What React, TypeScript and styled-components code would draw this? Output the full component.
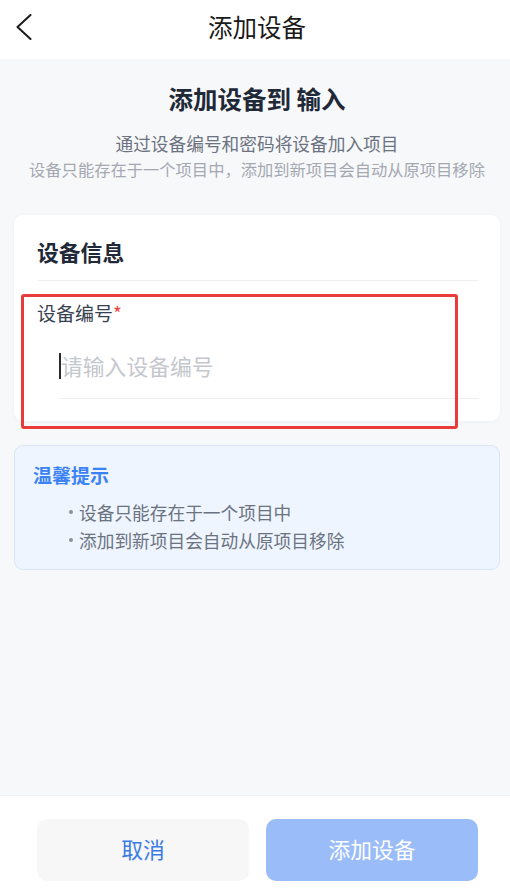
import React from "react";
import styled, { createGlobalStyle } from "styled-components";

const GlobalStyle = createGlobalStyle`
  html, body {
    margin: 0;
    padding: 0;
    background: #f7f8fa;
  }
  body {
    font-family: "Noto Sans CJK SC", "Noto Sans", sans-serif;
    -webkit-font-smoothing: antialiased;
  }
  * { box-sizing: border-box; }
`;

const Page = styled.div`
  width: 510px;
  min-height: 896px;
  display: flex;
  flex-direction: column;
  background: #f7f8fa;
`;

const Header = styled.header`
  height: 59px;
  background: #ffffff;
  display: grid;
  grid-template-columns: 1fr auto 1fr;
  align-items: center;
  padding: 0 10px 5px 14px;
`;

const BackButton = styled.button`
  justify-self: start;
  border: none;
  background: transparent;
  padding: 0 0 0 2px;
  display: flex;
  align-items: center;
  cursor: pointer;
`;

const HeaderTitle = styled.h1`
  margin: 0;
  font-size: 24.5px;
  font-weight: 400;
  line-height: 34px;
  color: #1a1a1a;
`;

const Content = styled.main`
  flex: 1;
  padding: 23px 10px 24px 14px;
  display: flex;
  flex-direction: column;
`;

const Intro = styled.section`
  text-align: center;
  display: flex;
  flex-direction: column;
`;

const Heading = styled.h2`
  margin: 0;
  font-size: 24.5px;
  line-height: 34px;
  font-weight: 700;
  color: #1f2937;
`;

const Desc = styled.p<{ $muted?: boolean }>`
  margin: ${(p) => (p.$muted ? "1px 0 0" : "14px 0 0")};
  font-size: ${(p) => (p.$muted ? "16.3px" : "17.7px")};
  line-height: ${(p) => (p.$muted ? "24px" : "26px")};
  color: ${(p) => (p.$muted ? "#a3a8b1" : "#6b7280")};
`;

const Card = styled.section`
  margin-top: 34px;
  background: #ffffff;
  border-radius: 9px;
  box-shadow: 0 1px 4px rgba(15, 23, 42, 0.04);
  padding: 22px 21px 22px 23px;
`;

const CardTitle = styled.h3`
  margin: 0;
  font-size: 21.8px;
  line-height: 30px;
  font-weight: 700;
  color: #1f2937;
  padding-bottom: 13px;
  border-bottom: 1px solid #eef0f3;
`;

const FormItem = styled.div`
  position: relative;
  padding-top: 19px;
  display: flex;
  flex-direction: column;
`;

const Label = styled.label`
  font-size: 19px;
  line-height: 26px;
  color: #374151;
`;

const Required = styled.span`
  color: #ef4444;
`;

const InputBox = styled.div`
  margin: 25px 0 0 22px;
  height: 48px;
  padding-bottom: 17px;
  border-bottom: 1px solid #eceef2;
  display: flex;
  align-items: center;
  font-size: 21.8px;
  line-height: 30px;
`;

const Caret = styled.span`
  display: inline-block;
  width: 2px;
  height: 26px;
  background: #2a2a2a;
`;

const Placeholder = styled.span`
  color: #c4c7cd;
`;

const Highlight = styled.div`
  position: absolute;
  top: 13px;
  left: -16px;
  right: 21px;
  bottom: -30px;
  border: 3px solid #ea3b3b;
  border-radius: 3px;
  pointer-events: none;
`;

const Tips = styled.section`
  margin-top: 24px;
  background: #eef5fe;
  border: 1px solid #d9e6f8;
  border-radius: 9px;
  padding: 16px 18px 15px 18px;
`;

const TipsTitle = styled.h4`
  margin: 0;
  font-size: 19px;
  line-height: 26px;
  font-weight: 700;
  color: #3b82f6;
`;

const TipsList = styled.ul`
  list-style: none;
  margin: 10px 0 0;
  padding: 0 0 0 36px;
`;

const TipItem = styled.li`
  display: flex;
  align-items: center;
  font-size: 17.7px;
  line-height: 28px;
  color: #6b7280;
  &::before {
    content: "";
    width: 4px;
    height: 4px;
    border-radius: 50%;
    background: #8b9099;
    margin-right: 6px;
    flex: none;
  }
`;

const Footer = styled.footer`
  height: 101px;
  background: #ffffff;
  border-top: 1px solid #eef0f2;
  padding: 23px 32px 0 37px;
  display: flex;
  align-items: flex-start;
  gap: 17px;
`;

const ActionButton = styled.button<{ $primary?: boolean }>`
  flex: 1;
  height: 62px;
  border: none;
  border-radius: 10px;
  font-family: inherit;
  font-size: 21.8px;
  font-weight: 400;
  line-height: 30px;
  padding: 0 0 2px;
  background: ${(p) => (p.$primary ? "#9abcf9" : "#f7f7f7")};
  color: ${(p) => (p.$primary ? "#ffffff" : "#3b7be6")};
  cursor: pointer;
`;

export default function App() {
  return (
    <>
      <GlobalStyle />
      <Page>
        <Header>
          <BackButton aria-label="返回">
            <svg width="16" height="26" viewBox="0 0 16 26" fill="none">
              <path
                d="M14.5 1 L1.5 13 L14.5 25"
                stroke="#1a1a1a"
                strokeWidth="2"
                strokeLinecap="round"
                strokeLinejoin="round"
              />
            </svg>
          </BackButton>
          <HeaderTitle>添加设备</HeaderTitle>
          <span />
        </Header>
        <Content>
          <Intro>
            <Heading>添加设备到 输入</Heading>
            <Desc>通过设备编号和密码将设备加入项目</Desc>
            <Desc $muted>设备只能存在于一个项目中，添加到新项目会自动从原项目移除</Desc>
          </Intro>
          <Card>
            <CardTitle>设备信息</CardTitle>
            <FormItem>
              <Label>
                设备编号<Required>*</Required>
              </Label>
              <InputBox>
                <Caret />
                <Placeholder>请输入设备编号</Placeholder>
              </InputBox>
              <Highlight />
            </FormItem>
          </Card>
          <Tips>
            <TipsTitle>温馨提示</TipsTitle>
            <TipsList>
              <TipItem>设备只能存在于一个项目中</TipItem>
              <TipItem>添加到新项目会自动从原项目移除</TipItem>
            </TipsList>
          </Tips>
        </Content>
        <Footer>
          <ActionButton>取消</ActionButton>
          <ActionButton $primary>添加设备</ActionButton>
        </Footer>
      </Page>
    </>
  );
}
